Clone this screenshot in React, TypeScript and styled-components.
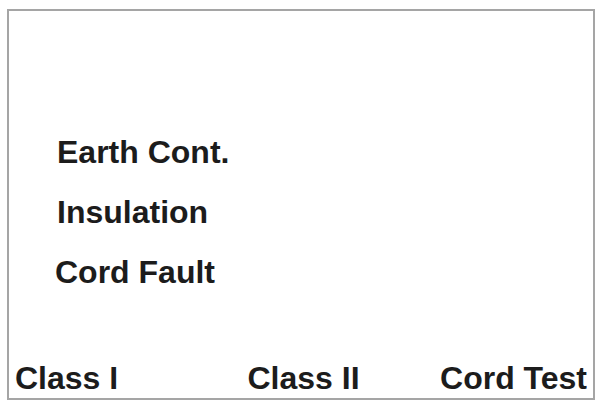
import React from "react";
import styled, { createGlobalStyle } from "styled-components";

const GlobalStyle = createGlobalStyle`
  html, body {
    margin: 0;
    padding: 0;
    background: #ffffff;
  }
  body {
    font-family: "Liberation Sans", Arial, sans-serif;
    color: #1c1c1c;
  }
`;

const Page = styled.div`
  width: 598px;
  height: 404px;
  box-sizing: border-box;
  padding: 9px 3px 4px 7px;
  background: #ffffff;
`;

const Screen = styled.div`
  box-sizing: border-box;
  width: 588px;
  height: 391px;
  border: 2px solid #a5a5a5;
  display: flex;
  flex-direction: column;
  padding: 111px 6px 1px 6px;
`;

const MenuList = styled.div`
  display: flex;
  flex-direction: column;
  padding-left: 42px;
  flex: 1;
`;

const MenuItem = styled.div<{ $shift?: number }>`
  font-size: 32px;
  font-weight: 700;
  line-height: 60px;
  margin-left: ${(p) => p.$shift ?? 0}px;
  white-space: nowrap;
`;

const SoftKeys = styled.div`
  display: grid;
  grid-template-columns: 1fr auto 1fr;
  align-items: end;
`;

const SoftKey = styled.div<{ $align: "start" | "center" | "end" }>`
  font-size: 32px;
  font-weight: 700;
  line-height: normal;
  justify-self: ${(p) => p.$align};
  padding-left: ${(p) => (p.$align === "center" ? 5 : 0)}px;
  white-space: nowrap;
`;

export default function App() {
  return (
    <>
      <GlobalStyle />
      <Page>
        <Screen>
          <MenuList>
            <MenuItem>Earth Cont.</MenuItem>
            <MenuItem>Insulation</MenuItem>
            <MenuItem $shift={-2}>Cord Fault</MenuItem>
          </MenuList>
          <SoftKeys>
            <SoftKey $align="start">Class I</SoftKey>
            <SoftKey $align="center">Class II</SoftKey>
            <SoftKey $align="end">Cord Test</SoftKey>
          </SoftKeys>
        </Screen>
      </Page>
    </>
  );
}
